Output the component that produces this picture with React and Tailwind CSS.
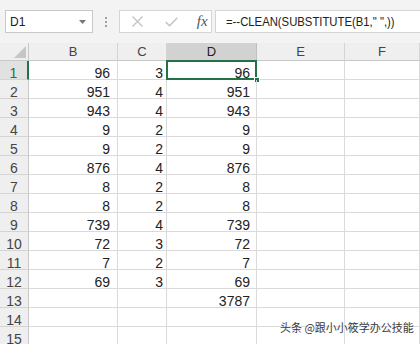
import React from "react";

const B = [96, 951, 943, 9, 9, 876, 8, 8, 739, 72, 7, 69];
const C = [3, 4, 4, 2, 2, 4, 2, 2, 4, 3, 2, 3];
const D = [96, 951, 943, 9, 9, 876, 8, 8, 739, 72, 7, 69, 3787];

const cellBase =
  "h-[19px] border-r border-b border-[#dadada] text-[14px] leading-[14px] pt-[5px] text-right text-[#222]";

function Row({ i }) {
  const n = i + 1;
  const sel = n === 1;
  return (
    <>
      <div
        className={
          "h-[19px] border-b border-[#d4d4d4] text-[14px] leading-[14px] pt-[5px] text-center " +
          (sel
            ? "bg-[#e1e1e1] text-[#217346] border-r-2 border-r-[#217346]"
            : "bg-[#efefef] text-[#444] border-r border-r-[#c8c8c8]")
        }
      >
        {n}
      </div>
      <div className={cellBase + " pr-[7px]"}>{B[i] ?? ""}</div>
      <div className={cellBase + " pr-[3px]"}>{C[i] ?? ""}</div>
      <div className={cellBase + " pr-[6px] relative"}>
        {D[i] ?? ""}
        {sel && (
          <>
            <div className="absolute left-[-1px] top-[-1px] w-[91px] h-[20px] border-2 border-[#217346]" />
            <div className="absolute right-[-4px] bottom-[-4px] w-[6px] h-[6px] bg-[#217346] border border-white" />
          </>
        )}
      </div>
      <div className={cellBase}></div>
      <div className={cellBase}></div>
    </>
  );
}

export default function App() {
  return (
    <div
      className="w-[420px] h-[344px] overflow-hidden bg-white relative"
      style={{ fontFamily: '"Liberation Sans", Arial, sans-serif' }}
    >
      {/* formula bar */}
      <div className="h-[43px] bg-[#f3f3f3] flex items-start pt-[10px]">
        <div className="ml-[5px] w-[93px] h-[23px] bg-white border border-[#c9c9c9] flex items-center pl-[4px] pr-[6px]">
          <span className="text-[12px] text-[#222] flex-1">D1</span>
          <svg width="7" height="4" viewBox="0 0 7 4">
            <path d="M0 0 L7 0 L3.5 4 Z" fill="#777" />
          </svg>
        </div>
        <div className="w-[28px] h-[23px] flex flex-col items-center justify-center gap-[2px]">
          <div className="w-[2px] h-[2px] bg-[#a0a0a0]" />
          <div className="w-[2px] h-[2px] bg-[#a0a0a0]" />
          <div className="w-[2px] h-[2px] bg-[#a0a0a0]" />
        </div>
        <div className="w-[100px] h-[23px] bg-white border border-[#d5d5d5] flex items-center">
          <svg className="ml-[12px]" width="11" height="11" viewBox="0 0 11 11">
            <path d="M0.5 0.5 L10.5 10.5 M10.5 0.5 L0.5 10.5" stroke="#c2c2c2" strokeWidth="1.3" />
          </svg>
          <svg className="ml-[22px]" width="13" height="10" viewBox="0 0 13 10">
            <path d="M0.7 5 L4.5 8.8 L12.3 0.8" stroke="#c2c2c2" strokeWidth="1.4" fill="none" />
          </svg>
          <span
            className="ml-[19px] text-[15px] italic text-[#555] leading-none"
            style={{ fontFamily: '"Liberation Serif", "Times New Roman", serif' }}
          >
            fx
          </span>
        </div>
        <div className="ml-[3px] flex-1 h-[23px] bg-white border border-[#d5d5d5] border-r-0 flex items-center pl-[10px]">
          <span className="text-[13px] text-[#222] whitespace-pre origin-left scale-x-[0.87] inline-block">
            {'=--CLEAN(SUBSTITUTE(B1," ",))'}
          </span>
        </div>
      </div>

      {/* grid */}
      <div className="grid grid-cols-[29px_89px_49px_90px_88px_75px]">
        <div className="h-[18px] bg-[#efefef] border-r border-b border-[#c8c8c8] relative">
          <svg className="absolute right-[2px] bottom-[2px]" width="12" height="12" viewBox="0 0 12 12">
            <path d="M12 0 L12 12 L0 12 Z" fill="#c6c6c6" />
          </svg>
        </div>
        {["B", "C", "D", "E", "F"].map((c) => (
          <div
            key={c}
            className={
              "h-[18px] border-r border-b text-[13px] leading-[16px] pt-[1px] text-center " +
              (c === "D"
                ? "bg-[#d2d2d2] border-[#c0c0c0] border-b-[#217346] text-[#222]"
                : "bg-[#efefef] border-[#d4d4d4] border-b-[#c8c8c8] text-[#444]")
            }
          >
            {c}
          </div>
        ))}
        {Array.from({ length: 15 }).map((_, i) => (
          <Row key={i} i={i} />
        ))}
      </div>

      <div
        className="absolute left-[280px] top-[320px] text-[11px] leading-[14px] text-[#3a3a3a] whitespace-nowrap"
        style={{
          fontFamily: '"Noto Sans CJK SC", sans-serif',
          textShadow: "0 0 2px #fff, 0 0 2px #fff",
        }}
      >
        头条 @跟小小筱学办公技能
      </div>
    </div>
  );
}
